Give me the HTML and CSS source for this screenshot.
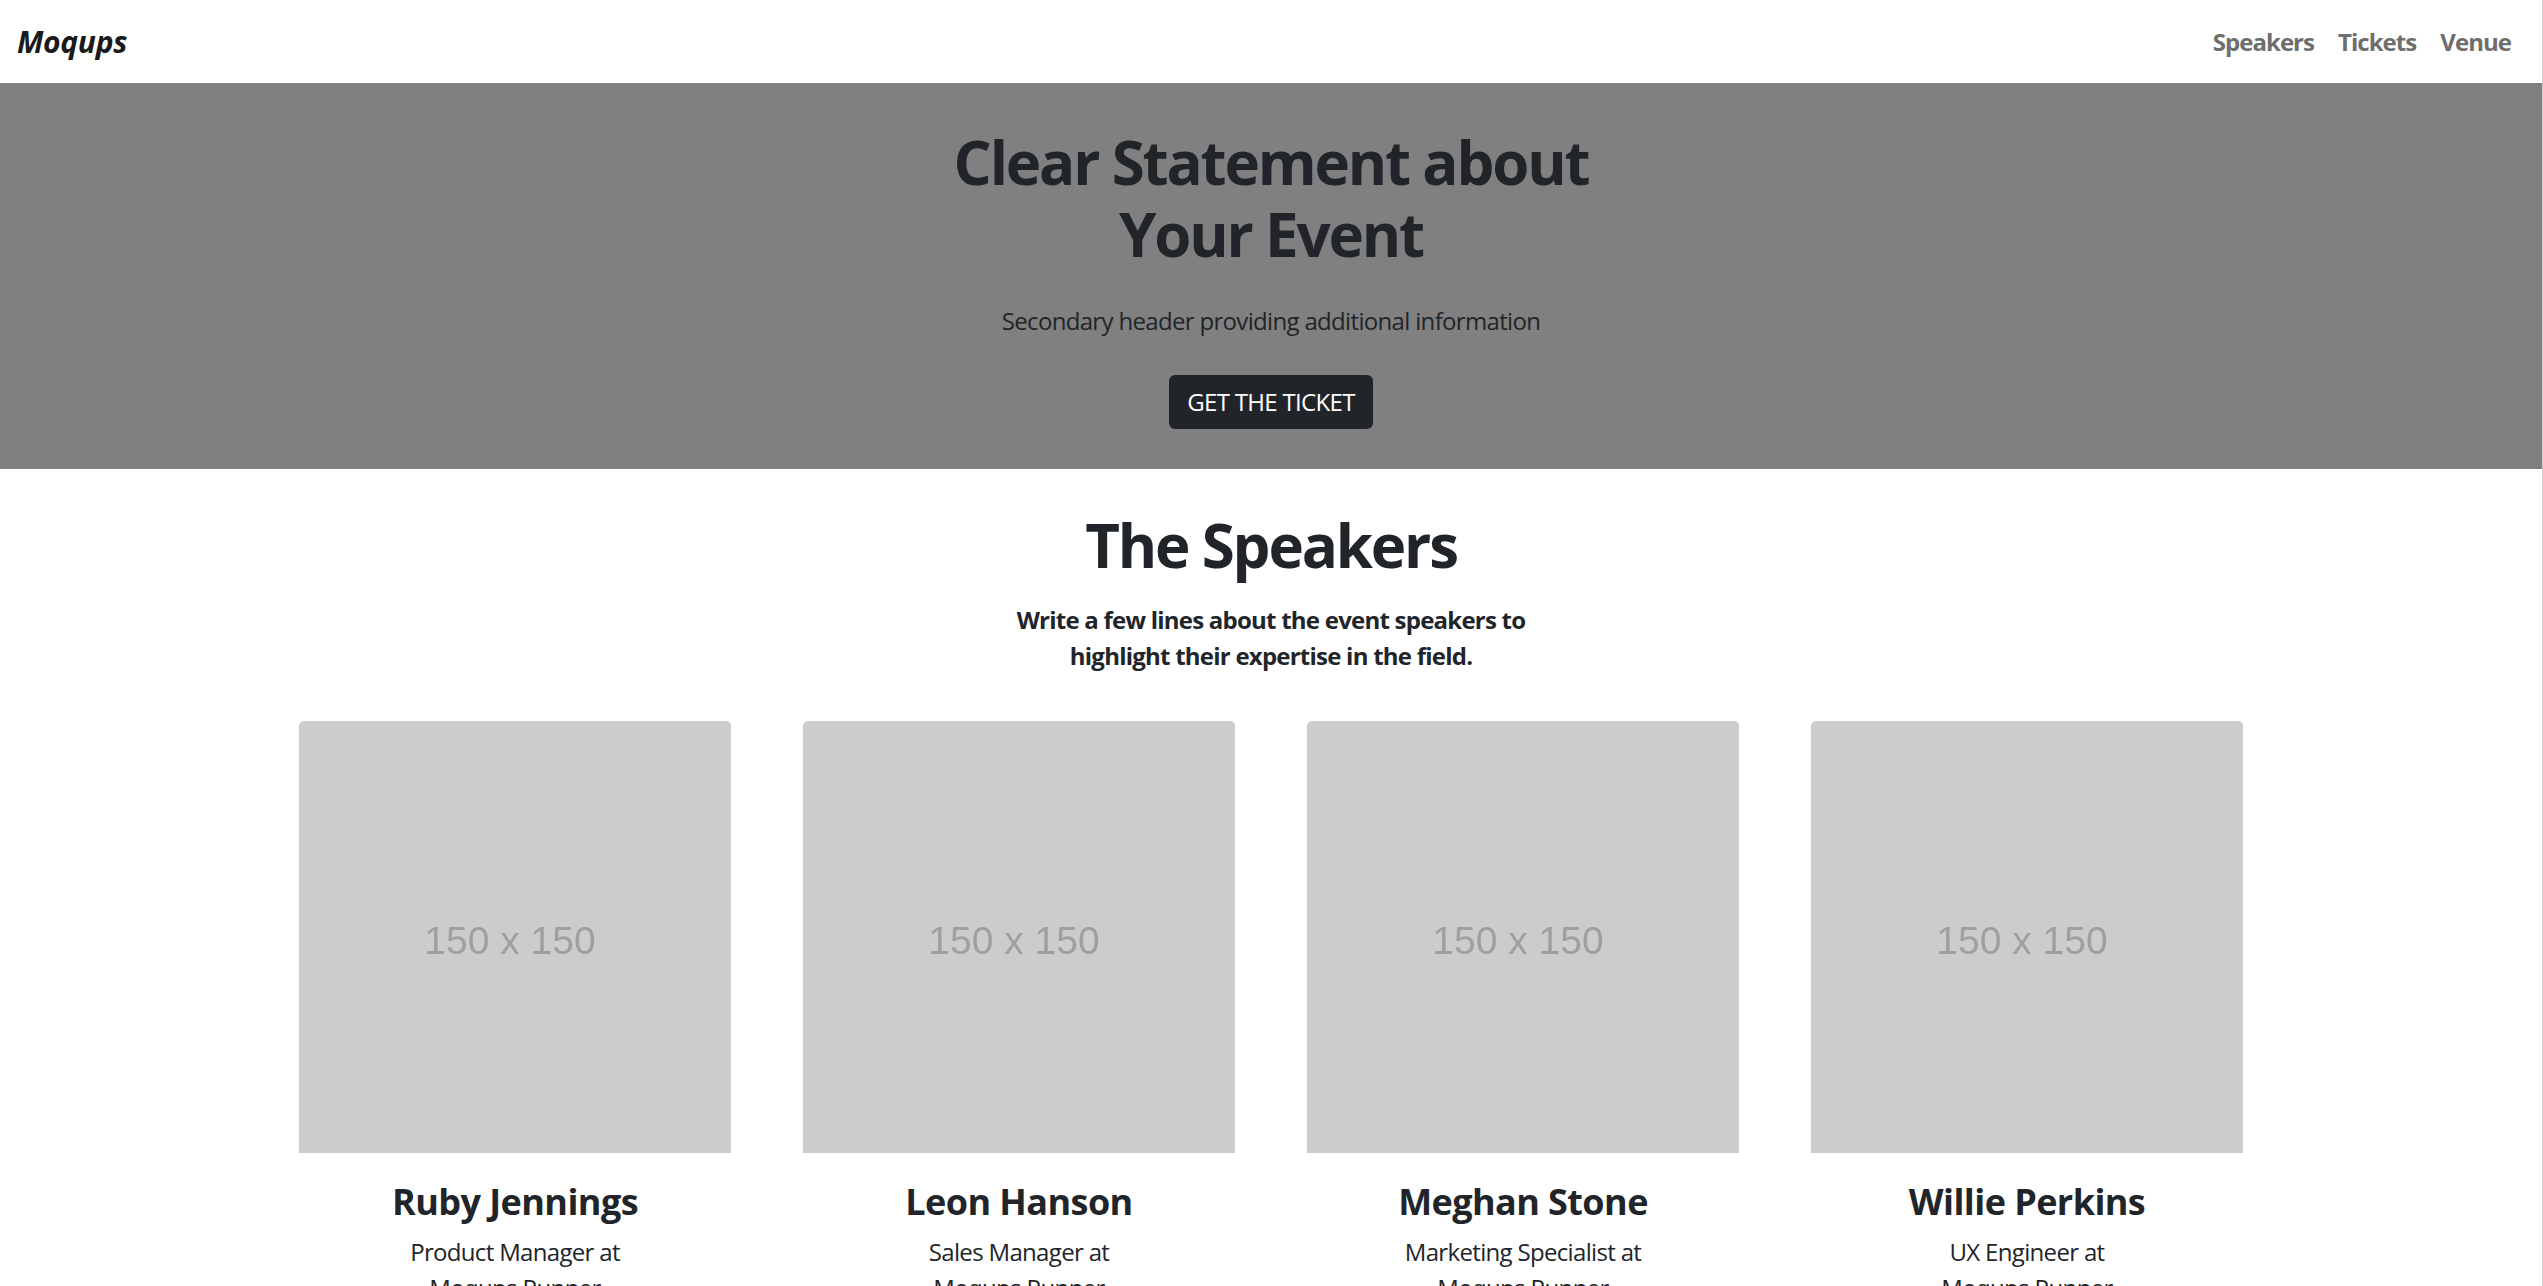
FILE: index.html
```html
<!DOCTYPE html>
<html lang="en">
<head>
<meta charset="utf-8">
<title>Moqups Event</title>
<link rel="stylesheet" href="styles.css">
</head>
<body>
<div class="page">
  <nav class="navbar">
    <a class="brand" href="#">Moqups</a>
    <ul class="nav">
      <li><a class="nav-link" href="#">Speakers</a></li>
      <li><a class="nav-link" href="#">Tickets</a></li>
      <li><a class="nav-link" href="#">Venue</a></li>
    </ul>
  </nav>

  <header class="hero">
    <h1 class="hero-title">Clear Statement about<br>Your Event</h1>
    <p class="hero-sub">Secondary header providing additional information</p>
    <a class="btn" href="#">GET THE TICKET</a>
  </header>

  <section class="speakers">
    <h2 class="section-title">The Speakers</h2>
    <p class="section-lead">Write a few lines about the event speakers to<br>highlight their expertise in the field.</p>
    <div class="cards">
      <article class="card">
        <div class="ph"><span>150 x 150</span></div>
        <div class="card-body">
          <h4 class="card-name">Ruby Jennings</h4>
          <p class="card-role">Product Manager at<br>Moqups Runner</p>
        </div>
      </article>
      <article class="card">
        <div class="ph"><span>150 x 150</span></div>
        <div class="card-body">
          <h4 class="card-name">Leon Hanson</h4>
          <p class="card-role">Sales Manager at<br>Moqups Runner</p>
        </div>
      </article>
      <article class="card">
        <div class="ph"><span>150 x 150</span></div>
        <div class="card-body">
          <h4 class="card-name">Meghan Stone</h4>
          <p class="card-role">Marketing Specialist at<br>Moqups Runner</p>
        </div>
      </article>
      <article class="card">
        <div class="ph"><span>150 x 150</span></div>
        <div class="card-body">
          <h4 class="card-name">Willie Perkins</h4>
          <p class="card-role">UX Engineer at<br>Moqups Runner</p>
        </div>
      </article>
    </div>
  </section>
</div>
</body>
</html>
```
FILE: styles.css
```css
html {
  font-size: 24px;
}
body {
  margin: 0;
  font-family: "Open Sans", "Noto Sans", "Liberation Sans", sans-serif;
  color: #212529;
  line-height: 1.5;
  letter-spacing: -0.028em;
  background: #fff;
}
.page {
  border-right: 1px solid #cfcfcf;
  min-height: 1400px;
}
a { text-decoration: none; }

.navbar {
  height: 83px;
  display: flex;
  align-items: center;
  justify-content: space-between;
  padding: 0 19px 0 17px;
}
.brand {
  font-size: 30px;
  font-weight: 700;
  font-style: italic;
  color: #1a1a1a;
  line-height: 45px;
  letter-spacing: -0.01em;
}
.nav {
  display: flex;
  list-style: none;
  margin: 0;
  padding: 0;
}
.nav-link {
  display: block;
  padding: 0 12px;
  font-size: 24px;
  font-weight: 700;
  color: #6e6e6e;
  line-height: 36px;
  letter-spacing: -0.04em;
}

.hero {
  background: #808080;
  text-align: center;
  padding: 43px 0 40px;
}
.hero-title {
  margin: 0 0 33px;
  font-size: 60px;
  font-weight: 700;
  line-height: 72px;
  letter-spacing: -0.036em;
  color: #212529;
}
.hero-sub {
  margin: 0 0 36px;
  font-size: 24px;
  line-height: 36px;
  color: #212529;
}
.btn {
  display: inline-block;
  background: #212529;
  color: #fff;
  font-size: 24px;
  line-height: 36px;
  padding: 9px 18px;
  border-radius: 6px;
}

.speakers {
  text-align: center;
  padding-top: 40px;
}
.section-title {
  margin: 0 0 21px;
  font-size: 60px;
  font-weight: 700;
  line-height: 72px;
  letter-spacing: -0.036em;
}
.section-lead {
  margin: 0 0 47px;
  font-size: 24px;
  font-weight: 700;
  line-height: 36px;
  letter-spacing: -0.032em;
}
.cards {
  display: grid;
  grid-template-columns: repeat(4, 432px);
  gap: 72px;
  justify-content: center;
}
.card {
  display: flex;
  flex-direction: column;
}
.ph {
  height: 432px;
  background: #cccccc;
  border-radius: 5px 5px 0 0;
  display: flex;
  align-items: center;
  justify-content: center;
}
.ph span {
  font-family: "Liberation Sans", Arial, sans-serif;
  font-size: 39px;
  letter-spacing: 0;
  color: #9f9f9f;
  filter: blur(0.6px);
  margin-top: 8px;
  margin-left: -10px;
}
.card-body {
  padding: 27px 30px 30px;
}
.card-name {
  margin: 0 0 11px;
  font-size: 36px;
  font-weight: 700;
  line-height: 43px;
  letter-spacing: -0.016em;
}
.card-role {
  margin: 0;
  font-size: 24px;
  line-height: 36px;
}
```
